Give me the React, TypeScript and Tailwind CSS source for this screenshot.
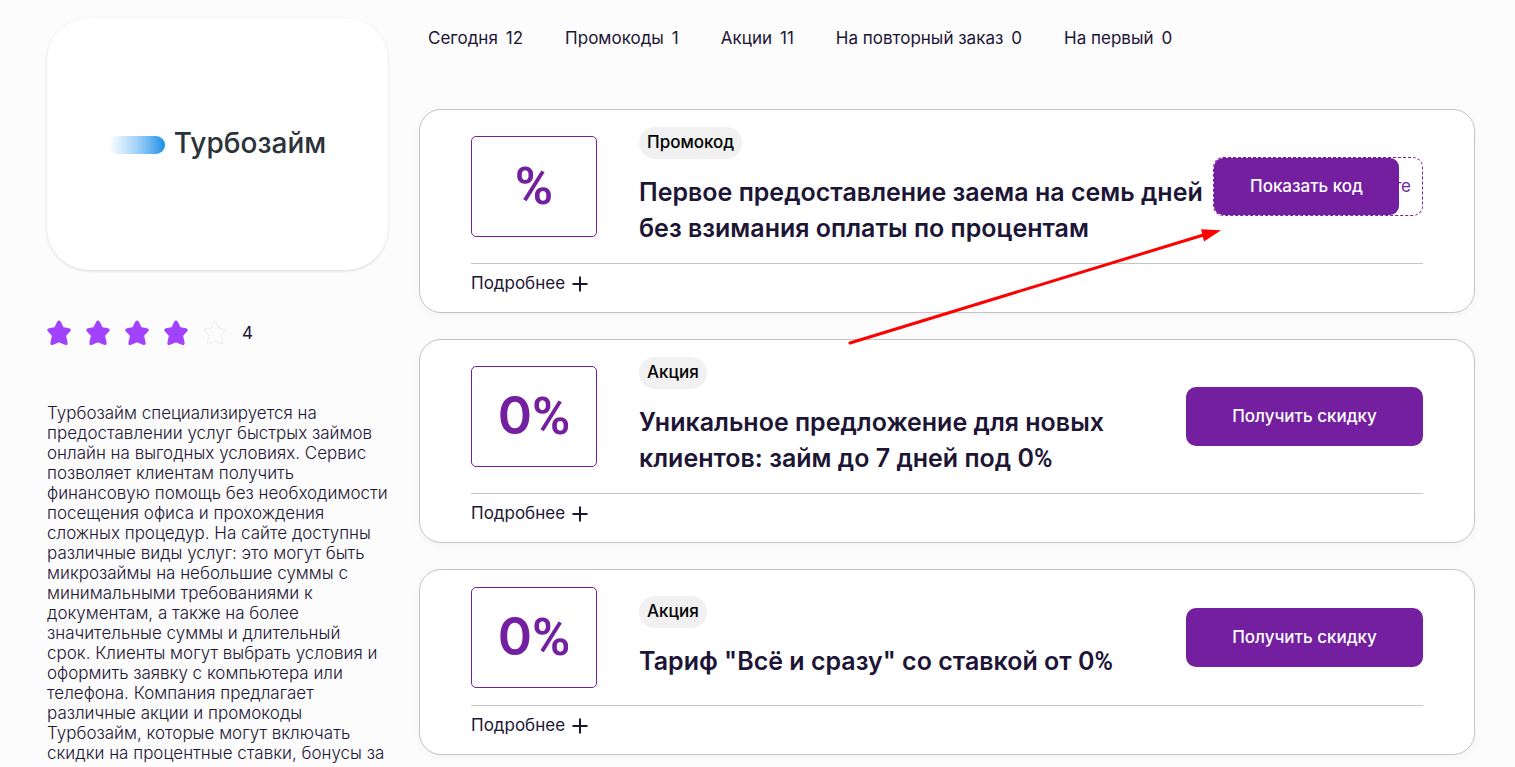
import { ReactNode } from "react";

const tabs = [
  { label: "Сегодня", count: 12 },
  { label: "Промокоды", count: 1 },
  { label: "Акции", count: 11 },
  { label: "На повторный заказ", count: 0 },
  { label: "На первый", count: 0 },
];

function Star({ filled }: { filled: boolean }) {
  return (
    <svg
      viewBox="0 0 24 26"
      className={filled ? "h-[26px] w-6 text-[#a142ff]" : "h-[26px] w-6 text-[#f1f1f1]"}
      fill={filled ? "currentColor" : "none"}
      stroke="currentColor"
      strokeWidth={filled ? 2 : 1.3}
      strokeLinejoin="round"
      aria-hidden="true"
    >
      <path d="M11.1 2.2Q12 .6 12.9 2.2L15.6 7.6Q15.9 8.2 16.6 8.3L21.8 9.2Q23.4 9.6 22.3 10.9L18.6 14.9Q18.1 15.5 18.2 16.2L19.6 22.8Q19.8 24.4 18.3 23.9L12.7 21.6Q12 21.3 11.3 21.6L5.7 23.9Q4.2 24.4 4.4 22.8L5.8 16.2Q5.9 15.5 5.4 14.9L1.7 10.9Q.6 9.6 2.2 9.2L7.4 8.3Q8.1 8.2 8.4 7.6Z" />
    </svg>
  );
}

function Logo() {
  return (
    <div className="flex items-center gap-[9px] pb-[2px]">
      <span className="mt-1 h-[18px] w-14 rounded-full bg-linear-to-r from-white via-[#a0d2f7] to-[#0090e8]" />
      <span className="text-[28px] leading-8 font-medium text-[#2b3238]">Турбозайм</span>
    </div>
  );
}

/* The percent sign is set in Roboto, the rest of the text in Inter. */
function WithPercent({ text }: { text: string }) {
  const [before, after] = text.split("%");
  if (after === undefined) return <>{text}</>;
  return (
    <>
      {before}
      <span className="font-[Roboto,sans-serif] leading-none font-semibold">%</span>
      {after}
    </>
  );
}

function OfferCard({
  value,
  kind,
  title,
  action,
}: {
  value: string;
  kind: string;
  title: string;
  action: ReactNode;
}) {
  return (
    <article className="rounded-[22px] border border-[#c4c4c4] bg-white px-[51px] pt-[17px] pb-[19px] shadow-[0_2px_10px_rgba(0,0,0,0.04)]">
      <div className="flex items-center pb-[17px]">
        <div className="flex h-[101px] w-[126px] shrink-0 items-center justify-center rounded-[5px] border border-[#731f9f] text-[52px] leading-none font-semibold text-[#731f9f]">
          <div>
            <WithPercent text={value} />
          </div>
        </div>
        <div className="ml-[42px] min-w-0 flex-1">
          <span className="flex h-8 w-fit items-center rounded-full bg-[#f1f1f1] px-2 text-[17px] font-medium text-black">
            {kind}
          </span>
          <h2 className="mt-[15px] text-[25px] leading-9 font-semibold">
            <WithPercent text={title} />
          </h2>
        </div>
        <div className="ml-2 shrink-0">{action}</div>
      </div>
      <div className="border-t border-[#c4c4c4] pt-[9px]">
        <button type="button" className="flex items-center gap-[7px] text-[17px] leading-5">
          Подробнее
          <svg viewBox="0 0 16 16" className="mt-0.5 size-4" stroke="currentColor" strokeWidth="2" aria-hidden="true">
            <path d="M8 .5V15.5M.5 8H15.5" />
          </svg>
        </button>
      </div>
    </article>
  );
}

function DiscountButton() {
  return (
    <button
      type="button"
      className="block h-[59px] w-[237px] rounded-[10px] bg-[#731f9f] text-[17px] font-medium text-white"
    >
      Получить скидку
    </button>
  );
}

function CodeButton() {
  return (
    <div className="relative flex h-[59px] w-[210px] items-center justify-end rounded-[10px] border border-dashed border-[#731f9f] pr-[11px] text-[17px] text-[#731f9f]">
      <span>те</span>
      <button
        type="button"
        className="absolute inset-y-0 left-0 w-[185px] rounded-[9px] bg-[#731f9f] text-[17px] font-medium text-white"
      >
        Показать код
      </button>
    </div>
  );
}

export default function App() {
  return (
    <div className="relative flex min-h-screen gap-[31px] bg-[#fcfcfc] pr-10 pl-[47px] font-[Inter,sans-serif] text-[#1d1536]">
      <aside className="w-[341px] shrink-0 pt-[18px]">
        <div className="flex h-[252px] items-center justify-center rounded-[42px] bg-white shadow-[0_1px_3px_rgba(0,0,0,0.14)]">
          <Logo />
        </div>
        <div className="mt-[50px] flex items-center gap-[15px]">
          {[1, 2, 3, 4, 5].map((n) => (
            <Star key={n} filled={n <= 4} />
          ))}
          <span className="text-[17px] leading-6">4</span>
        </div>
        <p className="mt-[57px] text-[17px] leading-5 font-light">
          Турбозайм специализируется на предоставлении услуг быстрых займов онлайн на выгодных
          условиях. Сервис позволяет клиентам получить финансовую помощь без необходимости посещения
          офиса и прохождения сложных процедур. На сайте доступны различные виды услуг: это могут
          быть микрозаймы на небольшие суммы с минимальными требованиями к документам, а также на
          более значительные суммы и длительный срок. Клиенты могут выбрать условия и оформить
          заявку с компьютера или телефона. Компания предлагает различные акции и промокоды
          Турбозайм, которые могут включать скидки на процентные ставки, бонусы за
        </p>
      </aside>

      <main className="min-w-0 flex-1 pt-7">
        <nav className="flex gap-[42px] pl-[9px]">
          {tabs.map((tab) => (
            <button key={tab.label} type="button" className="flex gap-2 text-[17px] leading-5">
              <span>{tab.label}</span>
              <span>{tab.count}</span>
            </button>
          ))}
        </nav>
        <div className="mt-[61px] flex flex-col gap-[26px]">
          <OfferCard
            value="%"
            kind="Промокод"
            title="Первое предоставление заема на семь дней без взимания оплаты по процентам"
            action={<CodeButton />}
          />
          <OfferCard
            value="0%"
            kind="Акция"
            title="Уникальное предложение для новых клиентов: займ до 7 дней под 0%"
            action={<DiscountButton />}
          />
          <OfferCard
            value="0%"
            kind="Акция"
            title={'Тариф "Всё и сразу" со ставкой от 0%'}
            action={<DiscountButton />}
          />
        </div>
      </main>

      <svg
        viewBox="0 0 374 120"
        className="pointer-events-none absolute top-[227px] left-[848px] h-[120px] w-[374px]"
        aria-hidden="true"
      >
        <path d="M2 116L357 7.5" stroke="#ff0000" strokeWidth="3" strokeLinecap="round" />
        <path d="M373 3.3L353 2.3L356 14.5Z" fill="#ff0000" />
      </svg>
    </div>
  );
}
